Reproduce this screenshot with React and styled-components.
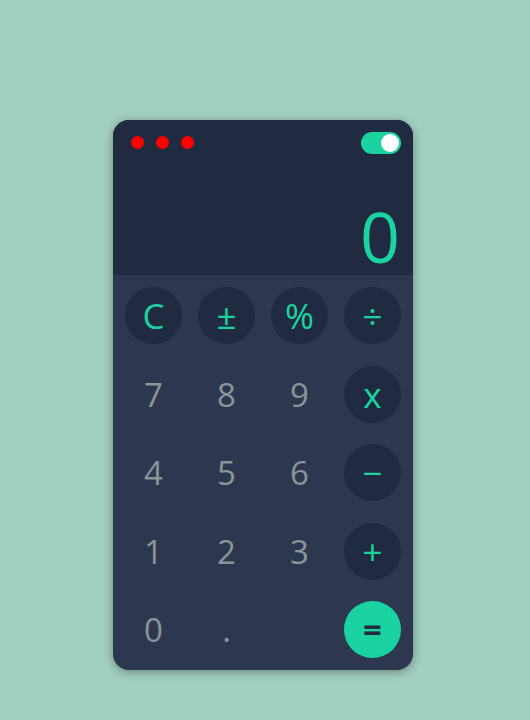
import React from 'react'
import styled, { createGlobalStyle } from 'styled-components'

const Global = createGlobalStyle`
  html, body {
    margin: 0;
    padding: 0;
    background: #a1cfc0;
    font-family: 'Open Sans', 'DejaVu Sans', sans-serif;
  }
`

const Page = styled.div`
  display: flex;
  justify-content: center;
  padding: 120px 4px 0 0;
  height: 600px;
`

const Card = styled.div`
  width: 300px;
  height: 550px;
  border-radius: 16px;
  overflow: hidden;
  background: #2e3750;
  box-shadow: 0 2px 10px rgba(0, 0, 0, 0.35);
  display: flex;
  flex-direction: column;
`

const Screen = styled.div`
  height: 155px;
  background: #202a40;
  padding: 12px 12px 0 18px;
  box-sizing: border-box;
  display: flex;
  flex-direction: column;
`

const TopBar = styled.div`
  display: flex;
  justify-content: space-between;
  align-items: center;
`

const Dots = styled.div`
  display: flex;
  gap: 12px;
  padding-bottom: 1px;
`

const Dot = styled.span`
  width: 13px;
  height: 13px;
  border-radius: 50%;
  background: #ff0000;
`

const Toggle = styled.div`
  width: 40px;
  height: 22px;
  border-radius: 11px;
  background: #1bd3a1;
  display: flex;
  align-items: center;
  justify-content: flex-end;
  padding: 0 2px;
  box-sizing: border-box;
`

const Knob = styled.span`
  width: 18px;
  height: 18px;
  border-radius: 50%;
  background: #fff;
`

const Display = styled.div`
  margin-top: auto;
  text-align: right;
  color: #1bd3a1;
  font-family: 'Open Sans', sans-serif;
  font-weight: 400;
  font-size: 70px;
  line-height: 70px;
  padding-bottom: 4px;
  padding-right: 1px;
`

const Keypad = styled.div`
  flex: 1;
  display: grid;
  grid-template-columns: repeat(4, 57px);
  grid-auto-rows: 57px;
  column-gap: 16px;
  row-gap: 21.5px;
  padding: 12px;
`

const Key = styled.div`
  border-radius: 50%;
  display: flex;
  align-items: center;
  justify-content: center;
  font-size: ${p => (p.$op ? '35px' : '33px')};
  color: ${p => (p.$eq ? '#202a40' : p.$op ? '#1bd3a1' : '#8a9598')};
  background: ${p => (p.$eq ? '#1bd3a1' : p.$op ? '#202a40' : 'transparent')};
  font-weight: ${p => (p.$eq ? 700 : 400)};
`

const keys = [
  ['C', 'op'], ['±', 'op'], ['%', 'op'], ['÷', 'op'],
  ['7'], ['8'], ['9'], ['x', 'op'],
  ['4'], ['5'], ['6'], ['−', 'op'],
  ['1'], ['2'], ['3'], ['+', 'op'],
  ['0'], ['.'], [''], ['=', 'eq'],
]

export default function App() {
  return (
    <Page>
      <Global />
      <Card>
        <Screen>
          <TopBar>
            <Dots>
              <Dot />
              <Dot />
              <Dot />
            </Dots>
            <Toggle>
              <Knob />
            </Toggle>
          </TopBar>
          <Display>0</Display>
        </Screen>
        <Keypad>
          {keys.map(([label, kind], i) => (
            <Key key={i} $op={kind === 'op'} $eq={kind === 'eq'}>
              {label}
            </Key>
          ))}
        </Keypad>
      </Card>
    </Page>
  )
}
